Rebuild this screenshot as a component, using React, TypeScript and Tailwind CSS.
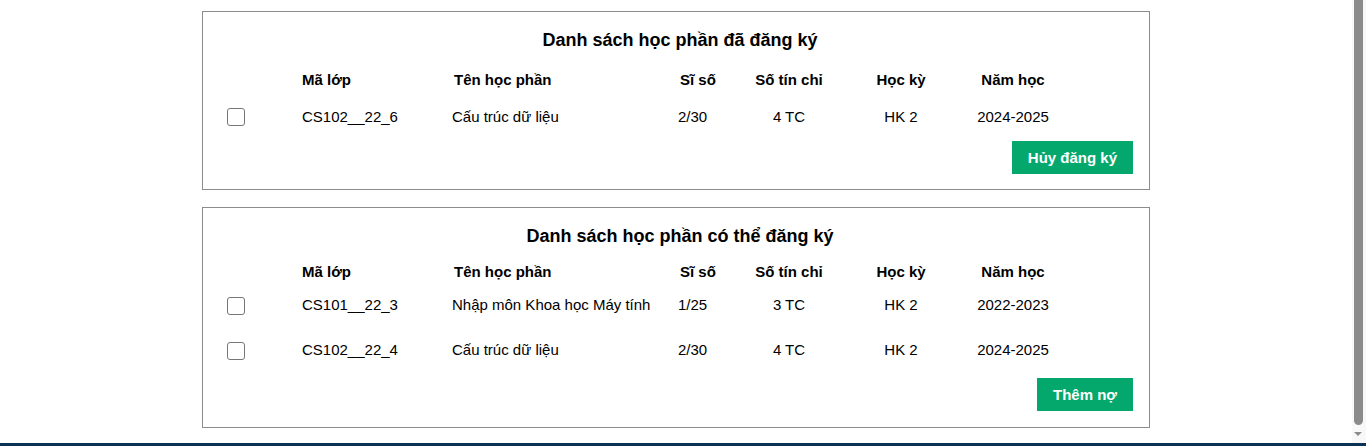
import React from "react";

type Row = { ma: string; ten: string; siso: string; tc: string; hk: string; nam: string };

const cols = "grid grid-cols-[75px_150px_226px_55px_112px_112px_112px]";

function Header() {
  return (
    <div className={`${cols} h-[20px] leading-[20px] text-[15px] font-bold`}>
      <div />
      <div>Mã lớp</div>
      <div className="pl-[2px]">Tên học phần</div>
      <div className="pl-[2px]">Sĩ số</div>
      <div className="text-center">Số tín chỉ</div>
      <div className="text-center">Học kỳ</div>
      <div className="text-center">Năm học</div>
    </div>
  );
}

function DataRow({ r, className, boxTop }: { r: Row; className?: string; boxTop: string }) {
  return (
    <div className={`${cols} items-start h-[21px] leading-[20px] text-[15px] ${className ?? ""}`}>
      <div className={`${boxTop} h-[21px]`}>
        <input
          type="checkbox"
          className="block appearance-none w-[18px] h-[18px] border border-[#767676] rounded-[3px] bg-white m-0"
        />
      </div>
      <div>{r.ma}</div>
      <div>{r.ten}</div>
      <div>{r.siso}</div>
      <div className="text-center">{r.tc}</div>
      <div className="text-center">{r.hk}</div>
      <div className="text-center">{r.nam}</div>
    </div>
  );
}

function Button({ label }: { label: string }) {
  return (
    <div className="flex justify-end">
      <button className="h-[33px] px-4 bg-[#05a86c] text-white font-bold text-[15px] leading-[33px]">
        {label}
      </button>
    </div>
  );
}

export default function App() {
  const registered: Row[] = [
    { ma: "CS102__22_6", ten: "Cấu trúc dữ liệu", siso: "2/30", tc: "4 TC", hk: "HK 2", nam: "2024-2025" },
  ];
  const available: Row[] = [
    { ma: "CS101__22_3", ten: "Nhập môn Khoa học Máy tính", siso: "1/25", tc: "3 TC", hk: "HK 2", nam: "2022-2023" },
    { ma: "CS102__22_4", ten: "Cấu trúc dữ liệu", siso: "2/30", tc: "4 TC", hk: "HK 2", nam: "2024-2025" },
  ];

  return (
    <div
      className="h-[446px] flex flex-col bg-white text-black overflow-hidden"
      style={{ fontFamily: '"Liberation Sans", Arial, sans-serif' }}
    >
      <div className="flex flex-1 min-h-0">
        <main className="flex-1 pt-[11px]">
          <section className="mx-auto w-[948px] border border-[#8c8c8c] pl-[24px] pr-[16px] pt-[16px] pb-[15px]">
            <h2 className="text-center text-[18px] font-bold leading-[24px]">
              Danh sách học phần đã đăng ký
            </h2>
            <div className="mt-[18px]">
              <Header />
            </div>
            <DataRow r={registered[0]} className="mt-[17px]" boxTop="pt-[1px]" />
            <div className="mt-[13px]">
              <Button label="Hủy đăng ký" />
            </div>
          </section>

          <section className="mx-auto mt-[17px] w-[948px] border border-[#8c8c8c] pl-[24px] pr-[16px] pt-[16px] pb-[16px]">
            <h2 className="text-center text-[18px] font-bold leading-[24px]">
              Danh sách học phần có thể đăng ký
            </h2>
            <div className="mt-[14px]">
              <Header />
            </div>
            <DataRow r={available[0]} className="mt-[13px]" boxTop="pt-[2px]" />
            <DataRow r={available[1]} className="mt-[24px]" boxTop="pt-[2px]" />
            <div className="mt-[17px]">
              <Button label="Thêm nợ" />
            </div>
          </section>
        </main>

        <div className="w-[14px] bg-[#f8f8f8] flex flex-col items-start">
          <div className="ml-[2px] w-[9px] h-[425px] bg-[#8b8b8b] rounded-b-[5px]" />
          <svg className="ml-[2px] mt-[7px]" width="8" height="4" viewBox="0 0 8 4">
            <path d="M0 0 L8 0 L4 4 Z" fill="#8b8b8b" />
          </svg>
        </div>
      </div>
      <div className="h-[3px] bg-[#0b3154]" />
    </div>
  );
}
